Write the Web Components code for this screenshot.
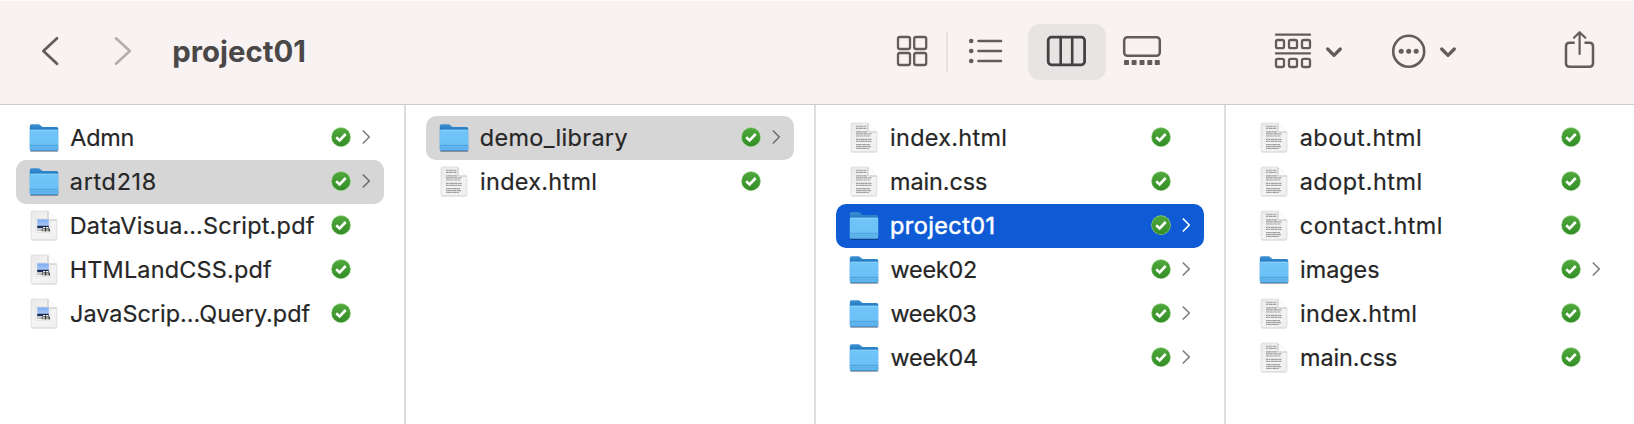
<!DOCTYPE html>
<html lang="en">
<head>
<meta charset="utf-8">
<title>project01</title>
<style>
  html, body { margin: 0; height: 100%; background: #fff; overflow: hidden; }
  body { font-family: Inter, "Liberation Sans", sans-serif; color: #262626; }
</style>
</head>
<body>
<finder-window>
  <finder-toolbar slot="toolbar"><fitted-text size="29.3" weight="700" start="1.2" ink="131">project01</fitted-text></finder-toolbar>
  <finder-column first>
    <finder-item kind="folder" ink="63.300" start="70.3">Admn</finder-item>
    <finder-item kind="folder" state="path" ink="85" start="70.8">artd218</finder-item>
    <finder-item kind="pdf" ink="243" start="71.7">DataVisua…Script.pdf</finder-item>
    <finder-item kind="pdf" ink="200.3" start="71.7">HTMLandCSS.pdf</finder-item>
    <finder-item kind="pdf" ink="239.5" start="71">JavaScrip…Query.pdf</finder-item>
  </finder-column>
  <finder-column>
    <finder-item kind="folder" state="path" ink="146.6" start="70.8">demo_library</finder-item>
    <finder-item kind="doc" ink="114.3" start="71">index.html</finder-item>
  </finder-column>
  <finder-column>
    <finder-item kind="doc" ink="114.3" start="71">index.html</finder-item>
    <finder-item kind="doc" ink="96" start="71">main.css</finder-item>
    <finder-item kind="folder" state="active" ink="102.5" start="71">project01</finder-item>
    <finder-item kind="folder" ink="85.5" start="70.5">week02</finder-item>
    <finder-item kind="folder" ink="85.8" start="70.5">week03</finder-item>
    <finder-item kind="folder" ink="86.5" start="70.5">week04</finder-item>
  </finder-column>
  <finder-column last>
    <finder-item kind="doc" ink="119.2" start="70.7">about.html</finder-item>
    <finder-item kind="doc" ink="119.8" start="70.7">adopt.html</finder-item>
    <finder-item kind="doc" ink="140" start="70.8">contact.html</finder-item>
    <finder-item kind="folder" ink="78.2" start="71">images</finder-item>
    <finder-item kind="doc" ink="114.3" start="71">index.html</finder-item>
    <finder-item kind="doc" ink="96" start="71">main.css</finder-item>
  </finder-column>
</finder-window>

<script>
const define = (name, cls) => customElements.define(name, cls);

/* Text tracked so that its drawn width equals the "ink" attribute. */
class FittedText extends HTMLElement {
  constructor() {
    super();
    this.attachShadow({ mode: 'open' }).innerHTML = `
      <style>:host { display: block; white-space: nowrap; flex: none; font-kerning: normal; }</style><slot></slot>`;
  }
  connectedCallback() {
    const size = this.getAttribute('size'), weight = this.getAttribute('weight') || 400;
    const text = this.textContent;
    const ctx = document.createElement('canvas').getContext('2d');
    ctx.font = `${weight} ${size}px Inter`;
    const m = ctx.measureText(text);
    const drawn = m.actualBoundingBoxRight + m.actualBoundingBoxLeft;
    const track = (Number(this.getAttribute('ink')) - drawn) / (text.length - 1);
    this.style.fontSize = size + 'px';
    this.style.fontWeight = weight;
    this.style.letterSpacing = track.toFixed(3) + 'px';
    this.style.marginLeft = (Number(this.getAttribute('start')) + m.actualBoundingBoxLeft).toFixed(2) + 'px';
  }
}

const PAGE = `
  <path d="M32.500 7.500H48L57 16.500V34.700Q57 36.600 55.500 36.600H32.500Q31 36.600 31 34.700V9Q31 7.500 32.500 7.500Z" fill="#000" opacity=".16"/>
  <path d="M32.500 7H48L57 16V34.200Q57 35.700 55.500 35.700H32.500Q31 35.700 31 34.200V8.500Q31 7 32.500 7Z" fill="url(#page)" stroke="#d8d8d8" stroke-width=".7"/>
  <path d="M48 7V14.500Q48 16 49.500 16H57Z" fill="#fdfdfd"/><path d="M48 7.500V14.800Q48 16 49.500 16H56.500" fill="none" stroke="#bdbdbd" stroke-width="1"/>`;
const PAGEDEF = `<defs><linearGradient id="page" x1="0" y1="0" x2="1" y2="1"><stop offset="0" stop-color="#e8e8e8"/><stop offset=".5" stop-color="#f5f5f5"/><stop offset="1" stop-color="#eeeeee"/></linearGradient>
  <linearGradient id="sky" x1="0" y1="0" x2="0" y2="1"><stop offset="0" stop-color="#7faaf0"/><stop offset="1" stop-color="#a9c9f5"/></linearGradient></defs>`;
const KINDS = {
  folder: `<defs>
      <linearGradient id="back" x1="0" y1="0" x2="0" y2="1"><stop offset="0" stop-color="#3f93d4"/><stop offset=".25" stop-color="#1f76bf"/><stop offset="1" stop-color="#2d86cc"/></linearGradient>
      <linearGradient id="front" x1="0" y1="0" x2="0" y2="1"><stop offset="0" stop-color="#71c5f9"/><stop offset=".68" stop-color="#6bc0f6"/><stop offset="1" stop-color="#59aee9"/></linearGradient></defs>
    <rect x="30" y="30" width="28.400" height="6" rx="1.500" fill="#000" opacity=".32"/>
    <path d="M29.800 10Q29.800 8.200 31.500 8.200H38.500C40.500 8.200 41 10.900 43 10.900H56.600Q58.200 10.900 58.200 12.500V33H29.800Z" fill="url(#back)"/>
    <path d="M29.800 15Q29.800 13.700 31.100 13.700H56.900Q58.200 13.700 58.200 15V33.500Q58.200 34.900 56.800 34.900H31.200Q29.800 34.900 29.800 33.500Z" fill="url(#front)"/>
    <path d="M30.500 14.200H57.500" stroke="#95d7fc" stroke-width=".8"/>
    <path d="M30 29.400H58" stroke="#4698d4" stroke-width=".8"/><path d="M30 31.300H58" stroke="#55a7df" stroke-width=".6"/>
    <path d="M30.500 34.600H57.500" stroke="#3d89c3" stroke-width=".8"/>`,
  doc: PAGEDEF + PAGE + `
    <g stroke="#9f9f9f" stroke-width="1.150" fill="none">
      <path d="M36 10.200H46.500M36 12.300H46.500" stroke-dasharray="2.500 .3 3.300 .2 1.300 .3"/>
      <path d="M36 15.800H47" stroke-dasharray="1.600 .3 3.600 .3"/>
      <path d="M36 17.900H51.500M36 20H50.500" stroke-dasharray="3.300 .3 2.400 .2 1.400 .3"/>
      <path d="M36 23.400H51.500M36 25.400H51.500" stroke-dasharray="2.600 .4 1.400 .3 3.600 .3"/>
      <path d="M36 28.600H50M36 30.600H51M36 32.500H49" stroke-dasharray="1.500 .2 3.200 .3"/>
    </g>`,
  pdf: PAGEDEF + PAGE + `
    <rect x="36" y="14.600" width="13.800" height="13.800" rx=".6" fill="#fafafa" stroke="#cfcfcf" stroke-width=".5"/>
    <rect x="37.200" y="15.300" width="11.600" height="6.500" fill="url(#sky)"/>
    <rect x="37.200" y="21.700" width="11.600" height="2.700" fill="#182b57"/>
    <rect x="37.200" y="24.300" width="11.600" height="2.600" fill="#b4b3b0"/>
    <path d="M37.400 24.800L40 25.500L42 24.300" stroke="#eee" stroke-width=".8" fill="none"/>
    <path d="M41.500 26L42.800 23.300H48.800L50 26.200V27.300H41.500Z" fill="#666"/>
    <path d="M43.100 23.700H45M46 23.700H48.200M42.800 25.800H44.600M46.300 26H48.500" stroke="#eee" stroke-width="1.200"/>
    <path d="M45.500 24V27.400M49.300 25V27.400" stroke="#222" stroke-width=".8"/>`
};

class FileIcon extends HTMLElement {
  constructor() { super(); this.attachShadow({ mode: 'open' }); }
  connectedCallback() {
    this.shadowRoot.innerHTML = `<style>:host { display: block; flex: none; width: 32px; height: 44px; } svg { display: block; }</style>
      <svg width="32" height="44" viewBox="28 0 32 44">${KINDS[this.getAttribute('kind')]}</svg>`;
  }
}

class SyncBadge extends HTMLElement {
  constructor() {
    super();
    this.attachShadow({ mode: 'open' }).innerHTML = `
      <style>:host { display: block; flex: none; width: 22px; height: 44px; } svg { display: block; }</style>
      <svg width="22" height="44" viewBox="330 0 22 44">
        <defs><linearGradient id="g" x1="0" y1="0" x2="0" y2="1"><stop offset="0" stop-color="#4fa93b"/><stop offset="1" stop-color="#348c27"/></linearGradient></defs>
        <circle cx="341" cy="21.100" r="9.800" fill="#8fce82"/>
        <circle cx="341" cy="21.100" r="9.200" fill="url(#g)"/>
        <path d="M336.200 21.300L339.600 24.500L345.700 18" fill="none" stroke="#fff" stroke-width="2.600"/>
      </svg>`;
  }
}

class FinderItem extends HTMLElement {
  constructor() { super(); this.attachShadow({ mode: 'open' }); }
  connectedCallback() {
    const kind = this.getAttribute('kind'), start = Number(this.getAttribute('start')) - 60;
    this.shadowRoot.innerHTML = `
      <style>
        :host { display: flex; box-sizing: border-box; height: 44px; padding-left: 12px; border-radius: 10px; --arrow: #808080; }
        :host([state="path"]) { background: #d6d6d6; --arrow: #707070; }
        :host([state="active"]) { background: #0f5bd6; color: #fff; --arrow: #fff; }
        fitted-text { line-height: 43px; height: 44px; -webkit-text-stroke: .2px currentColor; }
        :host([state="active"]) fitted-text { -webkit-text-stroke-width: .5px; }
        .space { flex: 1; }
        .arrow { width: 12px; height: 44px; margin: 0 10px; flex: none; }
      </style>
      <file-icon kind="${kind}"></file-icon>
      <fitted-text size="23.4" weight="400" start="${start}" ink="${this.getAttribute('ink')}">${this.textContent}</fitted-text>
      <span class="space"></span>
      <sync-badge></sync-badge>
      <svg class="arrow" viewBox="362 0 12 44">${kind === 'folder' ? '<path d="M363.300 15L369.300 21L363.300 27" fill="none" stroke="var(--arrow)" stroke-width="1.700" stroke-linecap="round" stroke-linejoin="round"/>' : ''}</svg>`;
  }
}

class FinderColumn extends HTMLElement {
  constructor() {
    super();
    this.attachShadow({ mode: 'open' }).innerHTML = `
      <style>
        :host { display: block; box-sizing: border-box; flex: none; width: 410px; padding: 11px 20px 0; border-right: 2px solid #dedede; }
        :host([first]) { width: 406px; padding-left: 16px; }
        :host([last]) { width: 408px; border-right: 0; }
      </style><slot></slot>`;
  }
}

class ToolIcon extends HTMLElement {
  constructor() { super(); this.attachShadow({ mode: 'open' }); }
  connectedCallback() {
    const [x, w] = this.getAttribute('span').split(' ').map(Number);
    this.shadowRoot.innerHTML = `
      <style>
        :host { display: block; flex: none; height: 56px; border-radius: 12px; color: #645b5c; }
        :host([selected]) { background: #e9e4e4; color: #444142; }
        :host([disabled]) { color: #b3adae; }
        svg { display: block; }
      </style>
      <svg width="${w}" height="56" viewBox="${x} 24 ${w} 56" fill="none" stroke="currentColor" stroke-width="2.300" stroke-linecap="round" stroke-linejoin="round">${TOOLS[this.getAttribute('name')]}</svg>`;
  }
}
const TOOLS = {
  back: '<path d="M57 38.300L43.400 51L57 63.700" stroke-width="2.800"/>',
  forward: '<path d="M116 38.300L129.800 51L116 63.700" stroke-width="2.600"/>',
  grid: '<rect x="898" y="37" width="12" height="12" rx="1.800"/><rect x="914.200" y="37" width="12" height="12" rx="1.800"/><rect x="898" y="53" width="12" height="12" rx="1.800"/><rect x="914.200" y="53" width="12" height="12" rx="1.800"/>',
  list: '<g fill="currentColor" stroke="none"><circle cx="971.200" cy="41" r="2.300"/><circle cx="971.200" cy="51" r="2.300"/><circle cx="971.200" cy="61" r="2.300"/></g><path d="M978.500 41H1001M978.500 51H1001M978.500 61H1001" stroke-width="2.600"/>',
  columns: '<rect x="1048.200" y="37.200" width="36.400" height="27.600" rx="3.200" stroke-width="2.800"/><path d="M1060.700 37V65M1072.200 37V65" stroke-width="2.600"/>',
  gallery: '<rect x="1124.200" y="37.200" width="35.600" height="18.600" rx="3.200" stroke-width="2.500"/><g fill="currentColor" stroke="none"><rect x="1124" y="60" width="5" height="5" rx=".7"/><rect x="1131.600" y="60" width="5" height="5" rx=".7"/><rect x="1139.500" y="60" width="5" height="5" rx=".7"/><rect x="1147.300" y="60" width="5" height="5" rx=".7"/><rect x="1154.800" y="60" width="5" height="5" rx=".7"/></g>',
  group: '<path d="M1276 34.700H1310M1276 53.400H1310"/><g><rect x="1276" y="40" width="8" height="8.200" rx="1.700"/><rect x="1289" y="40" width="8" height="8.200" rx="1.700"/><rect x="1302" y="40" width="8" height="8.200" rx="1.700"/><rect x="1276" y="58.800" width="8" height="8.200" rx="1.700"/><rect x="1289" y="58.800" width="8" height="8.200" rx="1.700"/><rect x="1302" y="58.800" width="8" height="8.200" rx="1.700"/></g>',
  caret: '<path d="M7.700 49L14 55.300L20.300 49" stroke-width="3.300"/>',
  more: '<circle cx="1408.700" cy="51.300" r="15.500" stroke-width="2.600"/><g fill="currentColor" stroke="none"><circle cx="1401.200" cy="51.300" r="2.500"/><circle cx="1408.700" cy="51.300" r="2.500"/><circle cx="1416.200" cy="51.300" r="2.500"/></g>',
  share: '<path d="M1574.700 42.700H1569.500Q1566 42.700 1566 46.200V63.300Q1566 66.800 1569.500 66.800H1589.500Q1593 66.800 1593 63.300V46.200Q1593 42.700 1589.500 42.700H1584.500" stroke-linecap="butt" stroke-width="2.500"/><path d="M1579.600 54V32.500M1574 37.700L1579.600 32.200L1585.300 37.700" stroke-width="2.200"/>'
};

class FinderToolbar extends HTMLElement {
  constructor() {
    super();
    this.attachShadow({ mode: 'open' }).innerHTML = `
      <style>
        :host { display: flex; box-sizing: border-box; height: 105px; padding-top: 24px; background: #f8f2f2; border-bottom: 1px solid #cfcbcc; box-shadow: inset 0 1px #fdfbfb; align-items: flex-start; color: #4a4748; }
        .title { flex: none; box-sizing: border-box; width: 756px; padding-left: 40px; line-height: 55px; }
        .rule { flex: none; width: 2px; height: 40px; margin: 8px 18px 0; background: #e8e2e2; }
      </style>
      <tool-icon name="back" span="40 20" style="margin-left:40px"></tool-icon>
      <tool-icon name="forward" span="112 20" style="margin-left:52px" disabled></tool-icon>
      <div class="title"><slot></slot></div>
      <tool-icon name="grid" span="888 40"></tool-icon>
      <span class="rule"></span>
      <tool-icon name="list" span="966 40"></tool-icon>
      <tool-icon name="columns" span="1028 78" style="margin-left:22px" selected></tool-icon>
      <tool-icon name="gallery" span="1120 44" style="margin-left:14px"></tool-icon>
      <tool-icon name="group" span="1272 42" style="margin-left:108px"></tool-icon>
      <tool-icon name="caret" span="0 28" style="margin-left:6px"></tool-icon>
      <tool-icon name="more" span="1390 38" style="margin-left:42px"></tool-icon>
      <tool-icon name="caret" span="0 28" style="margin-left:6px"></tool-icon>
      <tool-icon name="share" span="1562 36" style="margin-left:100px"></tool-icon>`;
  }
}

class FinderWindow extends HTMLElement {
  constructor() {
    super();
    this.attachShadow({ mode: 'open' }).innerHTML = `
      <style>
        :host { display: flex; flex-direction: column; height: 100vh; background: #fff; }
        .browser { display: flex; flex: 1; min-height: 0; }
      </style>
      <slot name="toolbar"></slot>
      <div class="browser"><slot></slot></div>`;
  }
}

define('fitted-text', FittedText);
define('file-icon', FileIcon);
define('sync-badge', SyncBadge);
define('tool-icon', ToolIcon);
define('finder-item', FinderItem);
define('finder-column', FinderColumn);
define('finder-toolbar', FinderToolbar);
define('finder-window', FinderWindow);
</script>
</body>
</html>
